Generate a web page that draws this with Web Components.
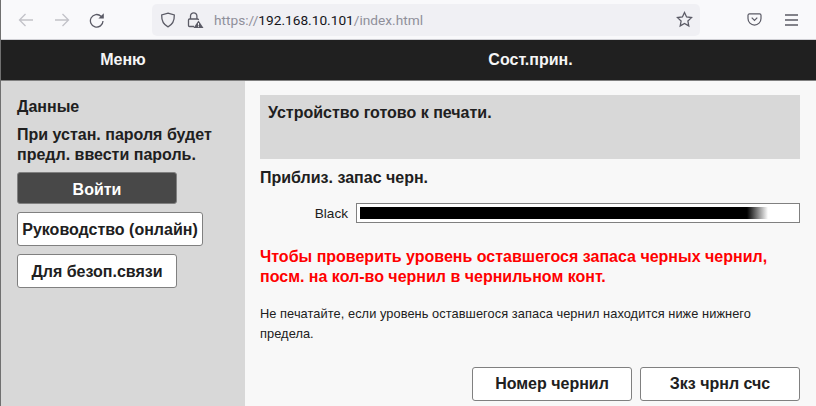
<!DOCTYPE html>
<html lang="ru">
<head>
<meta charset="utf-8">
<title>Сост.прин.</title>
<style>
html, body { margin: 0; height: 100%; overflow: hidden; }
body { font-family: "Liberation Sans", Arial, sans-serif; background: #f8f8f8; }
</style>
</head>
<body>
<printer-page></printer-page>

<script>
class BrowserBar extends HTMLElement {
    constructor() {
        super();
        this.attachShadow({ mode: 'open' });
        this.shadowRoot.innerHTML = `
            <style>
                :host {
                    display: flex;
                    align-items: center;
                    height: 40px;
                    box-sizing: border-box;
                    background: #f9f9fb;
                    border-bottom: 1px solid #cfcfd4;
                    color: #5b5b66;
                    padding-left: 17px;
                }
                svg { display: block; fill: none; stroke: currentColor; stroke-width: 1.3; flex: none; }
                .dim { color: #c2c2c8; }
                .nav { display: flex; gap: 20px; align-items: center; }
                .url {
                    display: flex;
                    align-items: center;
                    width: 548px;
                    height: 32px;
                    margin-left: 47px;
                    padding: 0 7px 0 8px;
                    box-sizing: border-box;
                    background: #f0f0f4;
                    border-radius: 5px;
                }
                .addr {
                    font: 13.7px Roboto, "Noto Sans", sans-serif;
                    color: #15141a;
                    margin-left: 10px;
                    flex: 1;
                    white-space: nowrap;
                }
                .addr span { color: #8f8f9a; }
                .right { display: flex; align-items: center; gap: 23px; margin-left: 47px; }
            </style>
            <div class="nav">
                <svg class="dim" width="16" height="16" viewBox="0 0 16 16"><path d="M15 8H1.500M7.500 2 1.500 8l6 6"/></svg>
                <svg class="dim" width="16" height="16" viewBox="0 0 16 16"><path d="M1 8h13.500M8.500 2l6 6-6 6"/></svg>
                <svg style="margin-left:-1px" width="16" height="16" viewBox="0 0 16 16"><path d="M14 9a6.300 6.300 0 1 1-2-4.800L13.500 5.700"/><path d="M14.800 1.200v5.400H9.400z" fill="currentColor" stroke="none"/></svg>
            </div>
            <div class="url">
                <svg width="16" height="16" viewBox="0 0 16 16"><path d="M8 1.200 14.300 3c.2 5-1.300 9.300-6.300 11.800C3 12.300 1.500 8 1.700 3z"/></svg>
                <svg width="18" height="18" viewBox="0 0 18 18" style="margin-left:10px"><path d="M4.500 8V5a3.200 3.200 0 0 1 6.400 0v3"/><path d="M8 15.500H3.500a1 1 0 0 1-1-1V9a1 1 0 0 1 1-1h8a1 1 0 0 1 1 1"/><path d="M12.500 9.500 17.500 17h-10z" fill="currentColor" stroke="none"/><path d="M12.500 12v2.500M12.500 15.200v.9" stroke="#f0f0f4" stroke-width="1"/></svg>
                <div class="addr"><span>https://</span>192.168.10.101<span>/index.html</span></div>
                <svg width="17" height="17" viewBox="0 0 17 17"><path d="m8.500 1.500 2.100 4.500 4.900.6-3.600 3.400.9 4.900-4.300-2.400-4.300 2.400.9-4.900L1.500 6.600 6.400 6z"/></svg>
            </div>
            <div class="right">
                <svg width="15" height="13" viewBox="0 0 16 14"><path d="M2.500 1h11A1.500 1.500 0 0 1 15 2.500V6A7 7 0 0 1 1 6V2.500A1.500 1.500 0 0 1 2.500 1z"/><path d="M5 5l3 3 3-3"/></svg>
                <svg width="13" height="12" viewBox="0 0 13 12"><path d="M0 1h13M0 6h13M0 11h13"/></svg>
            </div>
        `;
    }
}

class AppHeader extends HTMLElement {
    constructor() {
        super();
        this.attachShadow({ mode: 'open' });
        this.shadowRoot.innerHTML = `
            <style>
                :host {
                    display: grid;
                    grid-template-columns: 244px 1fr;
                    height: 41px;
                    box-sizing: border-box;
                    background: #202020;
                    border-bottom: 1px solid #808080;
                    color: #f5f5f5;
                    font-weight: bold;
                    font-size: 16px;
                    line-height: 40px;
                    text-align: center;
                }
            </style>
            <div><slot name="menu"></slot></div>
            <div><slot name="title"></slot></div>
        `;
    }
}

class UiButton extends HTMLElement {
    constructor() {
        super();
        this.attachShadow({ mode: 'open' });
        this.shadowRoot.innerHTML = `
            <style>
                :host {
                    display: flex;
                    align-items: center;
                    justify-content: center;
                    box-sizing: border-box;
                    width: 160px;
                    height: 34px;
                    padding-top: var(--btn-pad, 0);
                    background: #fff;
                    color: #202020;
                    border: 1px solid #808080;
                    border-radius: 3px;
                    font-weight: bold;
                    font-size: 16px;
                    white-space: nowrap;
                }
                :host([dark]) {
                    background: #484848;
                    color: #fff;
                    height: 32px;
                    padding-top: 4px;
                }
            </style>
            <slot></slot>
        `;
    }
}

class SideMenu extends HTMLElement {
    constructor() {
        super();
        this.attachShadow({ mode: 'open' });
        this.shadowRoot.innerHTML = `
            <style>
                :host {
                    display: block;
                    --btn-pad: 2px;
                    background: #d8d8d8;
                    padding: 16px 16px 0 16px;
                    color: #202020;
                    font-weight: bold;
                    font-size: 16px;
                    line-height: 20px;
                }
                .info { margin-top: 8px; margin-bottom: 7px; }
                .btns { display: flex; flex-direction: column; align-items: flex-start; gap: 8px; }
            </style>
            <div>Данные</div>
            <div class="info">При устан. пароля будет предл. ввести пароль.</div>
            <div class="btns"><slot></slot></div>
        `;
    }
}

class InkGauge extends HTMLElement {
    constructor() {
        super();
        this.attachShadow({ mode: 'open' });
        this.shadowRoot.innerHTML = `
            <style>
                :host {
                    display: grid;
                    grid-template-columns: 88px 1fr;
                    column-gap: 8px;
                    align-items: center;
                    font-size: 13.6px;
                    color: #202020;
                }
                .name { text-align: right; }
                .bar {
                    box-sizing: border-box;
                    height: 20px;
                    padding: 3px;
                    border: 1px solid #808080;
                    background: #fff;
                }
                .fill {
                    height: 100%;
                    width: 408px;
                    background: linear-gradient(to right, #000 0, #000 387px, #fff 408px);
                }
            </style>
            <div class="name"><slot></slot></div>
            <div class="bar"><div class="fill"></div></div>
        `;
    }
}

class StatusPanel extends HTMLElement {
    constructor() {
        super();
        this.attachShadow({ mode: 'open' });
        this.shadowRoot.innerHTML = `
            <style>
                :host {
                    display: block;
                    padding: 14px 16px 0 15px;
                    color: #202020;
                    font-size: 16px;
                }
                .state {
                    height: 64px;
                    box-sizing: border-box;
                    background: #d8d8d8;
                    padding: 8px;
                    font-weight: bold;
                    line-height: 20px;
                }
                h2 { font-size: 16px; line-height: 20px; margin: 9px 0 15px; }
                .warn {
                    color: #f00;
                    font-weight: bold;
                    line-height: 20px;
                    margin: 24px 0 17px;
                }
                .note {
                    font-size: 12.8px;
                    line-height: 20px;
                    letter-spacing: 0.07px;
                    margin: 0;
                }
                .actions { display: flex; justify-content: flex-end; gap: 8px; margin-top: 23px; }
            </style>
            <div class="state">Устройство готово к печати.</div>
            <h2>Приблиз. запас черн.</h2>
            <ink-gauge>Black</ink-gauge>
            <div class="warn">Чтобы проверить уровень оставшегося запаса черных чернил, посм. на кол-во чернил в чернильном конт.</div>
            <p class="note">Не печатайте, если уровень оставшегося запаса чернил находится ниже нижнего предела.</p>
            <div class="actions">
                <ui-button>Номер чернил</ui-button>
                <ui-button>Зкз чрнл счс</ui-button>
            </div>
        `;
    }
}

class PrinterPage extends HTMLElement {
    constructor() {
        super();
        this.attachShadow({ mode: 'open' });
        this.shadowRoot.innerHTML = `
            <style>
                :host {
                    display: flex;
                    flex-direction: column;
                    height: 100vh;
                    box-sizing: border-box;
                    border-left: 1px solid #707070;
                    font-family: "Liberation Sans", Arial, sans-serif;
                }
                .body { flex: 1; display: grid; grid-template-columns: 244px 1fr; min-height: 0; }
            </style>
            <browser-bar></browser-bar>
            <app-header>
                <span slot="menu">Меню</span>
                <span slot="title">Сост.прин.</span>
            </app-header>
            <div class="body">
                <side-menu>
                    <ui-button dark>Войти</ui-button>
                    <ui-button style="width:186px">Руководство (онлайн)</ui-button>
                    <ui-button>Для безоп.связи</ui-button>
                </side-menu>
                <status-panel></status-panel>
            </div>
        `;
    }
}

customElements.define('browser-bar', BrowserBar);
customElements.define('app-header', AppHeader);
customElements.define('ui-button', UiButton);
customElements.define('side-menu', SideMenu);
customElements.define('ink-gauge', InkGauge);
customElements.define('status-panel', StatusPanel);
customElements.define('printer-page', PrinterPage);
</script>
</body>
</html>
